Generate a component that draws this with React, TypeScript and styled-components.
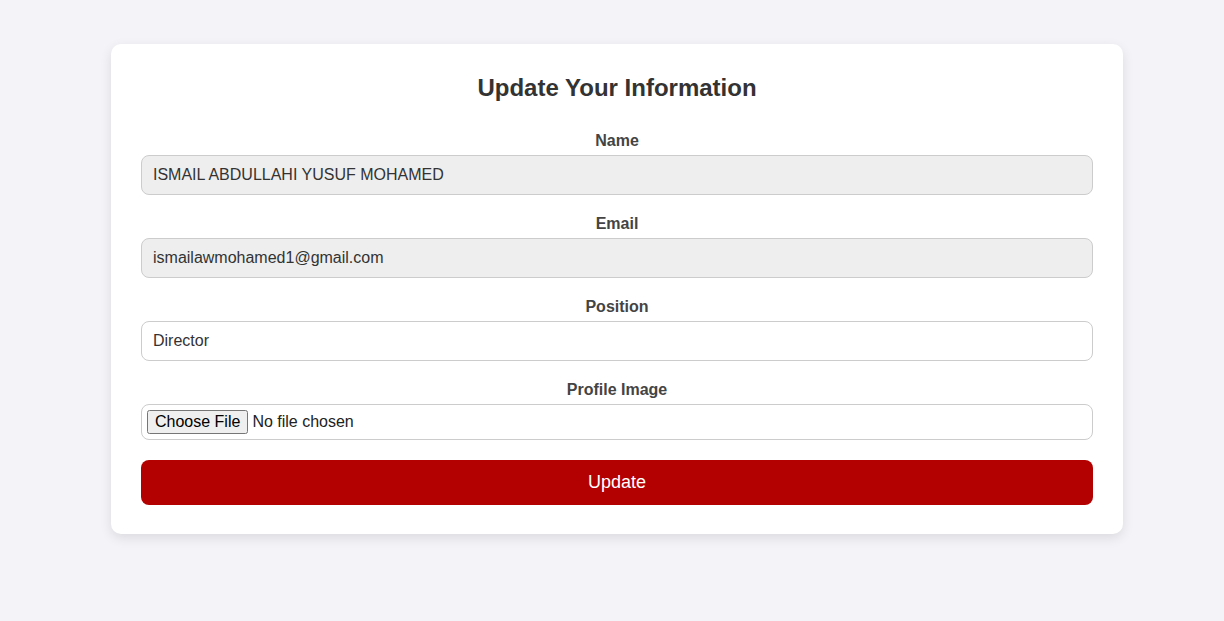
import React from "react";
import styled, { createGlobalStyle } from "styled-components";

const Global = createGlobalStyle`
  html, body { margin: 0; padding: 0; }
  body {
    background: #f4f4f8;
    font-family: "Liberation Sans", Arial, sans-serif;
    min-height: 621px;
  }
  * { box-sizing: border-box; }
`;

const Page = styled.div`
  padding: 44px 0 0 111px;
`;

const Card = styled.form`
  width: 1012px;
  background: #ffffff;
  border-radius: 10px;
  box-shadow: 0 4px 12px rgba(0, 0, 0, 0.1);
  padding: 30px 30px 29px;
`;

const Title = styled.h2`
  margin: 0 0 29px;
  text-align: center;
  font-size: 24px;
  font-weight: bold;
  line-height: 28px;
  color: #333;
`;

const Group = styled.div`
  display: flex;
  flex-direction: column;
  margin-bottom: 19px;
`;

const Label = styled.label`
  display: block;
  text-align: center;
  font-size: 16px;
  font-weight: bold;
  line-height: 18px;
  color: #444;
  padding-top: 1px;
  margin-bottom: 5px;
`;

const Input = styled.input<{ $readOnlyLook?: boolean }>`
  width: 100%;
  height: 40px;
  padding: 0 11px;
  font-family: "Liberation Sans", Arial, sans-serif;
  font-size: 16px;
  color: #333;
  border: 1px solid #ccc;
  border-radius: 8px;
  background: ${(p) => (p.$readOnlyLook ? "#eeeeee" : "#ffffff")};
  outline: none;
`;

const FileInput = styled.input`
  width: 100%;
  height: 36px;
  padding: 5px;
  font-family: "Liberation Sans", Arial, sans-serif;
  font-size: 16px;
  color: #222;
  border: 1px solid #ccc;
  border-radius: 8px;
  background: #fff;
  &::file-selector-button {
    font-family: "Liberation Sans", Arial, sans-serif;
    font-size: 16px;
    margin-right: 4px;
  }
`;

const Submit = styled.button`
  width: 100%;
  height: 45px;
  margin-top: 1px;
  border: none;
  border-radius: 8px;
  background: #b30000;
  color: #fff;
  font-family: "Liberation Sans", Arial, sans-serif;
  font-size: 18px;
  cursor: pointer;
`;

export default function App() {
  return (
    <>
      <Global />
      <Page>
        <Card onSubmit={(e) => e.preventDefault()}>
          <Title>Update Your Information</Title>
          <Group>
            <Label htmlFor="name">Name</Label>
            <Input id="name" $readOnlyLook readOnly defaultValue="ISMAIL ABDULLAHI YUSUF MOHAMED" />
          </Group>
          <Group>
            <Label htmlFor="email">Email</Label>
            <Input id="email" $readOnlyLook readOnly defaultValue="ismailawmohamed1@gmail.com" />
          </Group>
          <Group>
            <Label htmlFor="position">Position</Label>
            <Input id="position" defaultValue="Director" />
          </Group>
          <Group>
            <Label htmlFor="image">Profile Image</Label>
            <FileInput id="image" type="file" />
          </Group>
          <Submit type="submit">Update</Submit>
        </Card>
      </Page>
    </>
  );
}
